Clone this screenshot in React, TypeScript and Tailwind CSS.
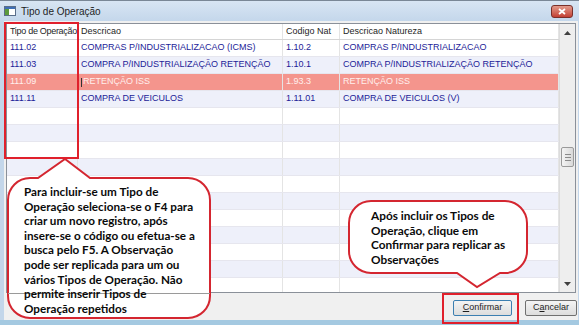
import React from 'react';

type Row = { tipo: string; desc: string; cod: string; nat: string; selected?: boolean };

const data: Row[] = [
  { tipo: '111.02', desc: 'COMPRAS P/INDUSTRIALIZACAO (ICMS)', cod: '1.10.2', nat: 'COMPRAS P/INDUSTRIALIZACAO' },
  { tipo: '111.03', desc: 'COMPRA P/INDUSTRIALIZAÇÃO RETENÇÃO', cod: '1.10.1', nat: 'COMPRA P/INDUSTRIALIZAÇÃO RETENÇÃO' },
  { tipo: '111.09', desc: 'RETENÇÃO ISS', cod: '1.93.3', nat: 'RETENÇÃO ISS', selected: true },
  { tipo: '111.11', desc: 'COMPRA DE VEICULOS', cod: '1.11.01', nat: 'COMPRA DE VEICULOS (V)' },
];

const rows: Row[] = [
  ...data,
  ...Array.from({ length: 11 }, () => ({ tipo: '', desc: '', cod: '', nat: '' })),
];

const leftNote = [
  'Para incluir-se um Tipo de',
  'Operação seleciona-se o F4 para',
  'criar um novo registro, após',
  'insere-se o código ou efetua-se a',
  'busca pelo F5. A Observação',
  'pode ser replicada para um ou',
  'vários Tipos de Operação. Não',
  'permite inserir Tipos de',
  'Operação repetidos',
];

const rightNote = ['Após incluir os Tipos de', 'Operação, clique em', 'Confirmar para replicar as', 'Observações'];

function WinIcon() {
  return (
    <svg width="12" height="10" viewBox="0 0 12 10">
      <rect x="0.5" y="0.5" width="11" height="9" fill="#fff" stroke="#5a6e8a" />
      <rect x="1" y="1" width="10" height="2" fill="#3f6fb6" />
      <rect x="1" y="3" width="4" height="6" fill="#5b9a3c" />
    </svg>
  );
}

function Scrollbar() {
  return (
    <div className="flex w-[16px] flex-col border-l border-[#dcdcdc] bg-[#eeeeee]">
      <div className="flex h-[17px] items-center justify-center">
        <svg width="7" height="4" viewBox="0 0 7 4">
          <path d="M0 4 L3.5 0 L7 4 Z" fill="#404040" />
        </svg>
      </div>
      <div className="flex flex-1 flex-col">
        <div className="mx-[1px] mt-[106px] flex h-[20px] flex-col items-center justify-center gap-[2px] rounded-[2px] border border-[#9a9a9a] bg-gradient-to-r from-[#f4f4f4] to-[#d9d9d9]">
          <div className="h-px w-[6px] bg-[#8a8a8a]" />
          <div className="h-px w-[6px] bg-[#8a8a8a]" />
          <div className="h-px w-[6px] bg-[#8a8a8a]" />
        </div>
      </div>
      <div className="flex h-[17px] items-center justify-center">
        <svg width="7" height="4" viewBox="0 0 7 4">
          <path d="M0 0 L3.5 4 L7 0 Z" fill="#404040" />
        </svg>
      </div>
    </div>
  );
}

export default function App() {
  const cell = 'flex h-full items-center overflow-hidden whitespace-nowrap border-r border-[#e4e4e4] pl-[3px]';
  return (
    <div
      className="relative flex h-[325px] w-[579px] flex-col overflow-hidden border-t border-[#7a8796] bg-[#c3d6ea] pb-[5px]"
      style={{ fontFamily: '"Liberation Sans", Arial, sans-serif' }}
    >
      {/* Title bar */}
      <div className="flex h-[20px] items-center justify-between bg-gradient-to-b from-[#d8e5f3] to-[#c4d7eb] pl-[4px] pr-[6px]">
        <div className="flex items-center gap-[5px]">
          <WinIcon />
          <span className="text-[10px] text-[#1e1e1e]">Tipo de Operação</span>
        </div>
        <div className="flex h-[13px] w-[22px] items-center justify-center rounded-[3px] border border-[#7a302a] bg-gradient-to-b from-[#e29a8c] to-[#c23e33]">
          <svg width="8" height="7" viewBox="0 0 8 7">
            <path d="M1 1 L7 6 M7 1 L1 6" stroke="#fff" strokeWidth="1.8" />
          </svg>
        </div>
      </div>

      {/* Body */}
      <div className="ml-[4px] mr-[1px] flex flex-1 flex-col bg-[#f0f0f0]">
        <div className="mx-[2px] mt-[2px] flex h-[270px] border border-[#8a9099] bg-white">
          <div className="flex w-[552px] flex-col overflow-hidden text-[9px]">
            <div className="flex h-[16px] shrink-0 border-b border-[#d5d5d5] text-[#1e1e1e]">
              <div className={`${cell} w-[71px] tracking-[-0.3px]`}>Tipo de Operação</div>
              <div className={`${cell} w-[205px]`}>Descricao</div>
              <div className={`${cell} w-[57px]`}>Codigo Nat</div>
              <div className={`${cell} w-[219px]`}>Descricao Natureza</div>
            </div>
            {rows.map((r, i) => {
              const bg = r.selected
                ? 'bg-[#f4958d] text-[#fff0ee]'
                : i % 2 === 1
                  ? 'bg-[#eef0fa] text-[#1c1c98]'
                  : 'bg-white text-[#1c1c98]';
              return (
                <div key={i} className={`flex h-[17px] shrink-0 border-b border-[#e6e6ee] ${bg}`}>
                  <div className={`${cell} w-[71px]`}>{r.tipo}</div>
                  <div className={`${cell} w-[205px]`}>
                    {r.selected && <span className="mr-[1px] h-[9px] w-px bg-[#333]" />}
                    {r.desc}
                  </div>
                  <div className={`${cell} w-[57px]`}>{r.cod}</div>
                  <div className={`${cell} w-[219px]`}>{r.nat}</div>
                </div>
              );
            })}
          </div>
          <Scrollbar />
        </div>

        {/* Buttons */}
        <div className="flex justify-end gap-[13px] pr-[1px] pt-[7px] text-[9px] text-[#1e1e1e]">
          <button className="flex h-[16px] w-[59px] items-center justify-center rounded-[2px] border border-[#3c7fb1] bg-gradient-to-b from-[#f4f4f4] to-[#dddddd]">
            <span>
              <span className="underline">C</span>onfirmar
            </span>
          </button>
          <button className="flex h-[16px] w-[52px] items-center justify-center rounded-[2px] border border-[#707070] bg-gradient-to-b from-[#f4f4f4] to-[#dddddd]">
            <span>
              C<span className="underline">a</span>ncelar
            </span>
          </button>
        </div>
      </div>
      <div className="absolute bottom-0 left-0 h-[5px] w-full bg-[#a4c9e1]" />

      {/* Annotations */}
      <svg className="pointer-events-none absolute left-0 top-0" width="579" height="325" viewBox="0 0 579 325">
        <path
          d="M30 177 L38 177 L65 158 L90 177 L188 177 A22 22 0 0 1 210 199 L210 295 A22 22 0 0 1 188 317 L30 317 A22 22 0 0 1 8 295 L8 199 A22 22 0 0 1 30 177 Z"
          fill="#fff"
          stroke="#d42630"
          strokeWidth="2"
        />
        <path
          d="M371 200 L505 200 A22 22 0 0 1 527 222 L527 250 A22 22 0 0 1 505 272 L500 272 L477 286 L457 272 L371 272 A22 22 0 0 1 349 250 L349 222 A22 22 0 0 1 371 200 Z"
          fill="#fff"
          stroke="#d42630"
          strokeWidth="2"
        />
      </svg>
      <div className="pointer-events-none absolute left-[8px] top-[292px] h-px w-[202px] bg-[#9a9a9a]" />
      <div className="pointer-events-none absolute left-[4px] top-[21px] h-[137px] w-[75px] border-2 border-[#e0202c]" />
      <div className="pointer-events-none absolute left-[442px] top-[292px] h-[31px] w-[77px] border-2 border-[#e0202c]" />

      <div
        className="pointer-events-none absolute left-[24px] top-[183px] text-[11.7px] font-bold leading-[14.6px] text-[#0a0a0a]"
        style={{ fontFamily: 'Lato, "Open Sans", sans-serif' }}
      >
        {leftNote.map((l) => (
          <div key={l}>{l}</div>
        ))}
      </div>
      <div
        className="pointer-events-none absolute left-[371px] top-[208px] text-[11.8px] font-bold leading-[14.6px] text-[#0a0a0a]"
        style={{ fontFamily: 'Lato, "Open Sans", sans-serif' }}
      >
        {rightNote.map((l) => (
          <div key={l}>{l}</div>
        ))}
      </div>
    </div>
  );
}
